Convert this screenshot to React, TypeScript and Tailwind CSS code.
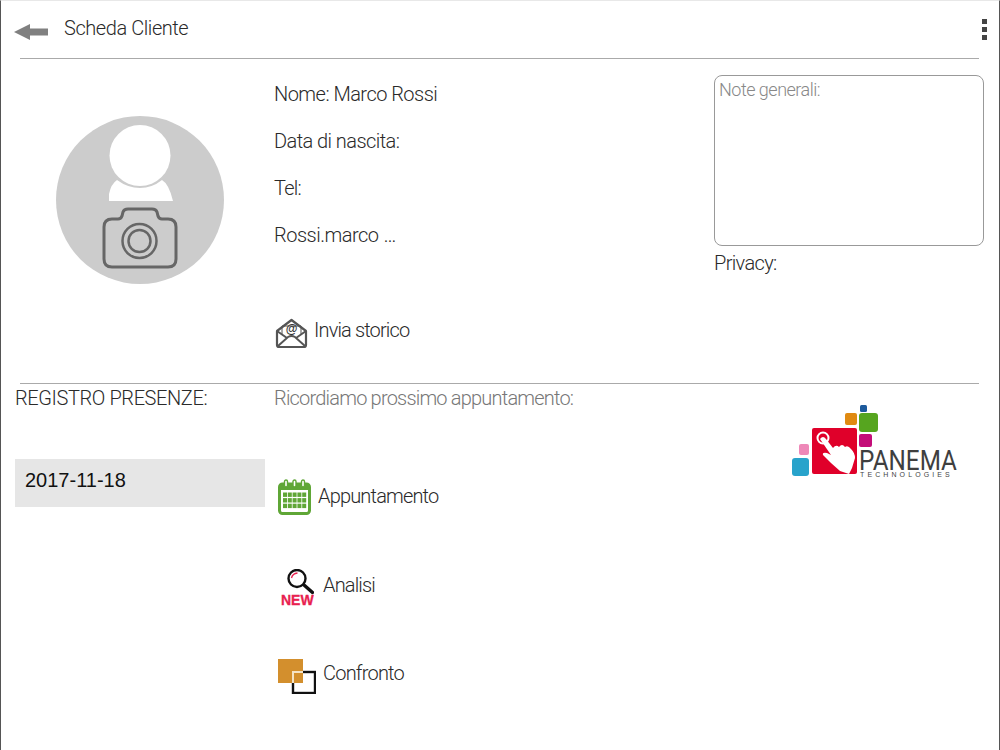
const font = "font-['Roboto','Liberation_Sans',sans-serif]";

function BackArrow() {
  return (
    <svg width="34" height="18" viewBox="0 0 34 18">
      <path d="M0 9 L16 1 V5.5 H34 V12.5 H16 V17 Z" fill="#808080" />
    </svg>
  );
}

function Avatar() {
  return (
    <svg width="168" height="168" viewBox="0 0 168 168">
      <circle cx="84" cy="84" r="84" fill="#cccccc" />
      <path d="M53 85 V78 Q55 68 61 64 Q72 72 84 72 Q96 72 106 64 Q113 68 117 85 Z" fill="#fff" />
      <circle cx="84" cy="39.5" r="30.5" fill="#fff" />
      <path
        d="M56 103 H62 Q65 103 66 100 L67 96 Q68 93 72 93 H96 Q100 93 101 96 L102 100 Q103 103 106 103 H112 Q120 103 120 111 V143 Q120 151 112 151 H56 Q48 151 48 143 V111 Q48 103 56 103 Z"
        fill="none"
        stroke="#666"
        strokeWidth="3"
      />
      <circle cx="83.5" cy="125" r="17" fill="none" stroke="#666" strokeWidth="2.5" />
      <circle cx="83.5" cy="125" r="11" fill="none" stroke="#666" strokeWidth="2.5" />
    </svg>
  );
}

function Envelope() {
  return (
    <svg width="33" height="31" viewBox="0 0 33 31">
      <path
        d="M2 13 L16.5 2 L31 13 V27 Q31 29 29 29 H4 Q2 29 2 27 Z"
        fill="none"
        stroke="#555"
        strokeWidth="2.2"
        strokeLinejoin="round"
      />
      <path d="M2 13 L12 20 M31 13 L21 20 M3 28 L13 19 Q16.5 17 20 19 L30 28" fill="none" stroke="#555" strokeWidth="2" />
      <path d="M7 16 V8 H26 V16" fill="none" stroke="#555" strokeWidth="1" />
      <text x="16.5" y="15" textAnchor="middle" fontSize="12" fontWeight="700" fill="#333" fontFamily="Liberation Sans">
        @
      </text>
    </svg>
  );
}

function CalendarIcon() {
  const cells = [];
  for (let r = 0; r < 3; r++) {
    for (let c = 0; c < 5; c++) {
      cells.push(<rect key={`${r}-${c}`} x={5 + c * 4.8} y={13.5 + r * 5.6} width="4" height="4.4" fill="#5fa636" />);
    }
  }
  return (
    <svg width="33" height="36" viewBox="0 0 33 36">
      <rect x="1.5" y="5" width="30" height="29.5" rx="3" fill="none" stroke="#5fa636" strokeWidth="3" />
      <rect x="1.5" y="5" width="30" height="6" fill="#5fa636" />
      {[8, 16.5, 25].map(x => (
        <rect key={x} x={x - 1.5} y="1" width="3" height="7" rx="1.5" fill="#fff" stroke="#5fa636" strokeWidth="1.4" />
      ))}
      {cells}
    </svg>
  );
}

function AnalisiIcon() {
  return (
    <svg width="36" height="38" viewBox="0 0 36 38">
      <circle cx="19" cy="9.5" r="8.5" fill="#fff" stroke="#111" strokeWidth="2.4" />
      <path d="M13.5 9 Q14.5 4.5 19.5 4" fill="none" stroke="#e8214f" strokeWidth="1.3" />
      <path d="M26 16 L34.5 23.5" stroke="#111" strokeWidth="3.4" strokeLinecap="round" />
      <text x="3" y="36" fontSize="14" fontWeight="700" fill="#e8214f" stroke="#e8214f" strokeWidth="0.3" fontFamily="Liberation Sans">
        NEW
      </text>
    </svg>
  );
}

function ConfrontoIcon() {
  return (
    <svg width="38" height="35" viewBox="0 0 38 35">
      <rect x="15" y="13" width="22" height="21" fill="none" stroke="#111" strokeWidth="2.4" />
      <rect x="0" y="0" width="25" height="24" fill="#d38f2d" />
      <rect x="14" y="12" width="11" height="12" fill="#f5e3c4" />
      <rect x="16" y="14" width="9" height="10" fill="#d38f2d" />
    </svg>
  );
}

function Logo() {
  return (
    <svg width="190" height="90" viewBox="0 0 190 90">
      <rect x="80" y="10" width="7" height="7" rx="1.5" fill="#1d5a9c" />
      <rect x="65" y="18" width="12" height="12" rx="2" fill="#e08a12" />
      <rect x="79" y="18" width="19" height="19" rx="3" fill="#56a51f" />
      <rect x="79" y="39" width="13" height="13" rx="2" fill="#c40d79" />
      <rect x="32" y="33" width="45" height="46" rx="2" fill="#e0002a" />
      <rect x="19" y="49" width="10" height="11" rx="2" fill="#ee88b8" />
      <rect x="12" y="63" width="17" height="18" rx="3" fill="#28a3cb" />
      <circle cx="43" cy="43" r="5.5" fill="none" stroke="#fff" strokeWidth="2" />
      <path
        d="M40 44 Q43 40 46 44 L53 53 Q56 49 59 52 Q62 48 65 52 Q68 50 71 54 Q75 58 75 63 L72 73 L69 79 L60 76 L51 68 L43 60 Q42 57 47 58 L51 60 Z"
        fill="#fff"
      />
      <text x="91" y="75" transform="scale(0.868 1)" fontSize="28" fill="#3f3f3f" fontFamily="Roboto" fontWeight="400">
        PANEMA
      </text>
      <text x="80" y="82" fontSize="7" fill="#444" fontFamily="Liberation Sans" letterSpacing="3.1">
        TECHNOLOGIES
      </text>
    </svg>
  );
}

function InfoLine({ children, className = '' }: { children: React.ReactNode; className?: string }) {
  return <div className={`h-[47px] leading-[47px] ${className}`}>{children}</div>;
}

export default function App() {
  return (
    <div className={`${font} box-border flex h-[750px] w-[1000px] flex-col overflow-hidden border-x border-t border-x-[#555] border-t-[#e8e8e8] bg-white text-[20px] font-light text-[#2a2a2a]`}>
      <header className="flex h-[57px] shrink-0 items-center justify-between pr-[12px] pl-[13px]">
        <div className="flex items-center gap-[16px]">
          <div className="mt-[4px] flex">
            <BackArrow />
          </div>
          <span className="-mt-[3px] tracking-[-0.43px]">Scheda Cliente</span>
        </div>
        <div className="flex flex-col gap-[3px]">
          <div className="h-[5px] w-[5px] bg-[#444]" />
          <div className="h-[5px] w-[5px] bg-[#444]" />
          <div className="h-[5px] w-[5px] bg-[#444]" />
        </div>
      </header>
      <div className="mr-[20px] ml-[19px] h-px shrink-0 bg-[#aaa]" />

      <section className="flex h-[324px] shrink-0">
        <div className="w-[273px] shrink-0 pt-[57px] pl-[55px]">
          <Avatar />
        </div>
        <div className="w-[440px] shrink-0 pt-[12px]">
          <InfoLine className="tracking-[-0.53px]">Nome: Marco Rossi</InfoLine>
          <InfoLine className="tracking-[-0.56px]">Data di nascita:</InfoLine>
          <InfoLine className="tracking-[-0.75px]">Tel:</InfoLine>
          <InfoLine>
            <span className="tracking-[-0.5px]">Rossi.marco</span>
            <span className="ml-[5px]">…</span>
          </InfoLine>
          <div className="mt-[59px] flex items-start gap-[6px] pl-[1px]">
            <Envelope />
            <span className="leading-[25px] tracking-[-0.85px]">Invia storico</span>
          </div>
        </div>
        <div className="w-[270px] shrink-0 pt-[16px]">
          <div className="h-[171px] rounded-[8px] border border-[#999] px-[4px] py-[2px] text-[18px] leading-[24px] tracking-[-0.5px] text-[#888]">
            Note generali:
          </div>
          <div className="mt-[4px] leading-[26px] tracking-[-0.65px]">Privacy:</div>
        </div>
      </section>

      <div className="mr-[20px] ml-[19px] h-px shrink-0 bg-[#aaa]" />

      <section className="flex flex-1">
        <div className="w-[273px] shrink-0 pl-[14px]">
          <div className="leading-[28px] tracking-[-0.4px] whitespace-nowrap">REGISTRO PRESENZE:</div>
          <div className="mt-[47px] flex h-[48px] w-[250px] items-center bg-[#e6e6e6] pb-[6px] pl-[10px] font-['Liberation_Sans',sans-serif] font-normal text-[#111]">
            2017-11-18
          </div>
        </div>
        <div className="w-[506px] shrink-0">
          <div className="leading-[28px] tracking-[-0.8px] text-[#777]">Ricordiamo prossimo appuntamento:</div>
          <div className="mt-[67px] flex items-start gap-[7px] pl-[4px]">
            <CalendarIcon />
            <span className="leading-[34px] tracking-[-0.83px]">Appuntamento</span>
          </div>
          <div className="mt-[54px] flex items-start gap-[9px] pl-[4px]">
            <AnalisiIcon />
            <span className="leading-[32px] tracking-[-0.85px]">Analisi</span>
          </div>
          <div className="mt-[52px] flex items-start gap-[7px] pl-[4px]">
            <ConfrontoIcon />
            <span className="leading-[28px] tracking-[-0.78px]">Confronto</span>
          </div>
        </div>
        <div className="pt-[11px]">
          <Logo />
        </div>
      </section>
    </div>
  );
}
